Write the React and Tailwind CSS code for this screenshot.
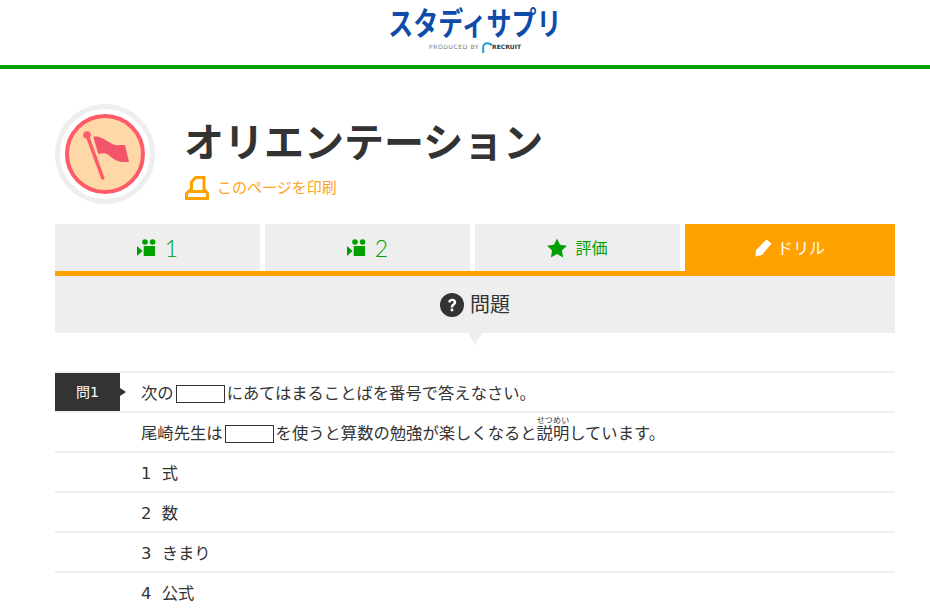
import React from "react";

const font = { fontFamily: '"DejaVu Sans", "Noto Sans CJK JP", sans-serif' };

function VideoIcon() {
  return (
    <svg width="19" height="17" viewBox="0 0 19 17" fill="#00a000" className="shrink-0">
      <circle cx="8" cy="3" r="2.8" />
      <circle cx="15.6" cy="3" r="2.8" />
      <rect x="6.7" y="7" width="11.3" height="10" />
      <path d="M0 7 L5.6 12 L0 17 Z" />
    </svg>
  );
}

function Tab({ icon, children, className }) {
  return (
    <div className={`flex items-center justify-center ${className}`}>
      {icon}
      {children}
    </div>
  );
}

function Row({ label, children, lineClass = "" }) {
  return (
    <div className="relative h-10 border-t-2 border-[#eeeeee] pl-[86px] pt-[9px] text-[16.32px] text-[#333333] whitespace-pre">
      {label && (
        <div className="absolute left-0 top-0 w-[65px] h-[38px] bg-[#333333] text-white text-[14px] flex items-center justify-center">
          {label}
          <span className="absolute left-[65px] top-[15px] w-0 h-0 border-y-[4px] border-y-transparent border-l-[6px] border-l-[#333333]" />
        </div>
      )}
      <div className={`h-[24px] leading-[24px] ${lineClass}`}>{children}</div>
    </div>
  );
}

function Blank() {
  return <span className="inline-block w-[49px] h-[18px] mx-[2px] border border-[#333333] align-middle -translate-y-px" />;
}

export default function App() {
  return (
    <div className="h-[611px] overflow-hidden bg-white" style={font}>
      <header className="h-[69px] border-b-4 border-[#00a000] pl-[20px] flex flex-col items-center">
        <div className="text-[#0f4ba8] text-[25px] font-bold leading-[32px] mt-[9px] scale-y-[1.25] whitespace-nowrap">
          スタディサプリ
        </div>
        <div className="flex items-center gap-[3px] h-[12px] text-[6px] leading-none tracking-[0.6px]">
          <span className="text-[#777777]">PRODUCED BY</span>
          <svg width="10" height="11" viewBox="0 0 10 11" fill="none">
            <path d="M1.2 11 V5 C1.2 2.5 3 1.2 5.5 1.2 C7.5 1.2 9 2 9.7 3.5" stroke="#1aa0d8" strokeWidth="2" />
          </svg>
          <span className="text-[#333333] font-bold ml-[-3px] text-[6px] tracking-normal">RECRUIT</span>
        </div>
      </header>

      <main className="ml-[55px] w-[840px]">
        <div className="flex mt-[35px] h-[100px]">
          <div className="w-[100px] h-[100px] rounded-full border-[5px] border-[#eeeeee] flex items-center justify-center shrink-0">
            <div className="w-[80px] h-[80px] rounded-full border-[4px] border-[#ff5a67] bg-[#ffd8a8]">
              <svg width="72" height="72" viewBox="0 0 72 72">
                <path d="M18 17 L33.7 60" stroke="#ff5a67" strokeWidth="3.6" strokeLinecap="round" />
                <circle cx="18" cy="17" r="3.8" fill="#ff5a67" />
                <path d="M24.3 18.7 C32 17 38 24 46 27 C50 27.5 53 27 56 27 L60 43.7 C52 45 46 43 41 38 C36 34 33 35.5 29.3 36 Z" fill="#f2546a" />
              </svg>
            </div>
          </div>
          <div className="ml-[31px]">
            <h1 className="text-[40px] font-bold leading-[48px] mt-[15px] ml-[-2px] text-[#333333] whitespace-nowrap">オリエンテーション</h1>
            <div className="flex items-center mt-[9px] ml-[-1px] text-[15px] leading-[24px] text-[#ffa31a]">
              <svg width="24" height="24" viewBox="0 0 24 24" fill="none" stroke="#ffa200" strokeWidth="3" className="mr-[8px]">
                <path d="M6.5 14 V6 L10.5 1.5 H19 V14" />
                <path d="M6.5 12.5 L1.5 17.5 V22.5 H22.5 V17.5 L19 13" />
                <path d="M5 15.5 H20.5" />
              </svg>
              このページを印刷
            </div>
          </div>
        </div>

        <div className="flex gap-[5px] mt-[20px] h-[47px] items-start">
          <Tab icon={<VideoIcon />} className="w-[205px] h-[47px] bg-[#eeeeee] text-[#00a000] text-[23px] gap-[9px]">
            <span className="font-['Lato'] font-light mt-[2px]">1</span>
          </Tab>
          <Tab icon={<VideoIcon />} className="w-[205px] h-[47px] bg-[#eeeeee] text-[#00a000] text-[23px] gap-[9px]">
            <span className="font-['Lato'] font-light mt-[2px]">2</span>
          </Tab>
          <Tab
            icon={
              <svg width="20" height="20" viewBox="0 0 24 24" fill="#00a000">
                <path d="M12 .5 l3.6 7.6 8.4 1.1 -6.1 5.8 1.5 8.3 -7.4 -4 -7.4 4 1.5 -8.3 L0 9.2 l8.4 -1.1 Z" />
              </svg>
            }
            className="w-[205px] h-[47px] bg-[#eeeeee] text-[#00a000] text-[16px] gap-[8px]"
          >
            <span className="mt-[3px]">評価</span>
          </Tab>
          <Tab
            icon={
              <svg width="17" height="18" viewBox="0 0 17 18" fill="#ffffff">
                <path d="M11.5 .5 L16.5 4.5 L7 16 L.5 17.5 L1 11 Z" />
              </svg>
            }
            className="w-[210px] h-[52px] pb-[5px] bg-[#ffa200] text-white text-[16px] gap-[5px] relative z-10"
          >
            <span className="mt-[2px]">ドリル</span>
          </Tab>
        </div>
        <div className="h-[5px] bg-[#ffa200]" />

        <div className="relative h-[57px] bg-[#eeeeee] flex items-center justify-center gap-[6px] text-[20px] text-[#333333]">
          <svg width="24" height="24" viewBox="0 0 24 24">
            <circle cx="12" cy="12" r="12" fill="#333333" />
            <path d="M8.2 9.3 C8.2 7 10 5.8 12.2 5.8 C14.6 5.8 16.2 7.2 16.2 9.2 C16.2 11.8 13.2 12 13.2 14.4 H10.8 C10.8 11 13.6 10.8 13.6 9.3 C13.6 8.5 13 8 12.1 8 C11.2 8 10.7 8.6 10.6 9.5 Z" fill="#ffffff" />
            <rect x="10.7" y="15.6" width="2.6" height="2.6" fill="#ffffff" />
          </svg>
          問題
          <span className="absolute left-[413px] top-[57px] w-0 h-0 border-x-[7px] border-x-transparent border-t-[12px] border-t-[#eeeeee]" />
        </div>

        <div className="mt-[38px]">
          <Row label="問1">
            次の<Blank />にあてはまることばを番号で答えなさい。
          </Row>
          <Row lineClass="mt-[-6px]">
            尾崎先生は<Blank />を使うと算数の勉強が楽しくなると
            <ruby>
              説明<rt className="text-[8px]">せつめい</rt>
            </ruby>
            しています。
          </Row>
          <Row>{"1  式"}</Row>
          <Row>{"2  数"}</Row>
          <Row>{"3  きまり"}</Row>
          <Row>{"4  公式"}</Row>
        </div>
      </main>
    </div>
  );
}
